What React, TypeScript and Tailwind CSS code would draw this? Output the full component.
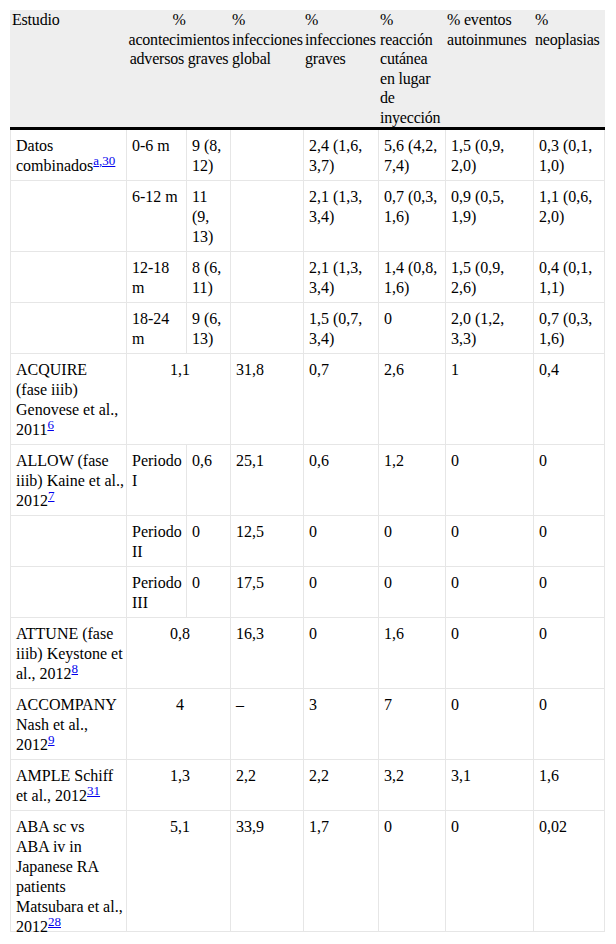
import type { ReactNode } from "react";

type Row = {
  // study name, one entry per printed line; the last line may carry a reference
  study: string[];
  ref?: string;
  // when span is set, the first value covers the two "acontecimientos" columns
  span?: boolean;
  cells: string[];
  tall?: boolean;
};

function Ref({ children }: { children: ReactNode }) {
  return <sup className="text-[13px] text-[#0000ee] underline">{children}</sup>;
}

const HEADERS: { lines: string[]; span?: number; pad: string }[] = [
  { lines: ["Estudio"], pad: "pl-[2px] text-left" },
  { lines: ["%", "acontecimientos", "adversos graves"], span: 2, pad: "px-0 text-center" },
  { lines: ["%", "infecciones", "global"], pad: "pl-[1px] text-left" },
  { lines: ["%", "infecciones", "graves"], pad: "pl-[1px] text-left" },
  { lines: ["%", "reacción", "cutánea", "en lugar", "de", "inyección"], pad: "pl-[1px] text-left" },
  { lines: ["% eventos", "autoinmunes"], pad: "pl-[1px] text-left" },
  { lines: ["%", "neoplasias"], pad: "pl-[1px] text-left" },
];

const ROWS: Row[] = [
  {
    study: ["Datos", "combinados"],
    ref: "a,30",
    cells: ["0-6 m", "9 (8, 12)", "", "2,4 (1,6, 3,7)", "5,6 (4,2, 7,4)", "1,5 (0,9, 2,0)", "0,3 (0,1, 1,0)"],
  },
  { study: [], cells: ["6-12 m", "11 (9, 13)", "", "2,1 (1,3, 3,4)", "0,7 (0,3, 1,6)", "0,9 (0,5, 1,9)", "1,1 (0,6, 2,0)"] },
  { study: [], cells: ["12-18 m", "8 (6, 11)", "", "2,1 (1,3, 3,4)", "1,4 (0,8, 1,6)", "1,5 (0,9, 2,6)", "0,4 (0,1, 1,1)"] },
  { study: [], cells: ["18-24 m", "9 (6, 13)", "", "1,5 (0,7, 3,4)", "0", "2,0 (1,2, 3,3)", "0,7 (0,3, 1,6)"] },
  {
    study: ["ACQUIRE", "(fase iiib)", "Genovese et al.,", "2011"],
    ref: "6",
    span: true,
    cells: ["1,1", "31,8", "0,7", "2,6", "1", "0,4"],
  },
  {
    study: ["ALLOW (fase", "iiib) Kaine et al.,", "2012"],
    ref: "7",
    cells: ["Periodo I", "0,6", "25,1", "0,6", "1,2", "0", "0"],
  },
  { study: [], cells: ["Periodo II", "0", "12,5", "0", "0", "0", "0"] },
  { study: [], cells: ["Periodo III", "0", "17,5", "0", "0", "0", "0"] },
  {
    study: ["ATTUNE (fase", "iiib) Keystone et", "al., 2012"],
    ref: "8",
    span: true,
    cells: ["0,8", "16,3", "0", "1,6", "0", "0"],
  },
  {
    study: ["ACCOMPANY", "Nash et al.,", "2012"],
    ref: "9",
    span: true,
    cells: ["4", "–", "3", "7", "0", "0"],
  },
  {
    study: ["AMPLE Schiff", "et al., 2012"],
    ref: "31",
    span: true,
    cells: ["1,3", "2,2", "2,2", "3,2", "3,1", "1,6"],
  },
  {
    study: ["ABA sc vs", "ABA iv in", "Japanese RA", "patients", "Matsubara et al.,", "2012"],
    ref: "28",
    span: true,
    tall: true,
    cells: ["5,1", "33,9", "1,7", "0", "0", "0,02"],
  },
];

function Study({ row }: { row: Row }) {
  return (
    <>
      {row.study.map((line, k) => (
        <span key={k} className="block whitespace-nowrap">
          {line}
          {k === row.study.length - 1 && row.ref && <Ref>{row.ref}</Ref>}
        </span>
      ))}
    </>
  );
}

const td = "align-top pl-[5px] pr-[2px] pt-[6px] pb-[4px] border-r border-b border-[#e6e6e6]";
const th = "align-top font-normal pr-0 pt-0 pb-0 bg-[#eeeeee] border-b-[3px] border-black tracking-[-0.2px]";

export default function App() {
  return (
    <div className="bg-white min-h-screen p-[10px] font-['Liberation_Serif',serif] text-[16px] leading-[20px] text-black">
      <table className="table-fixed w-[595px] border-separate border-spacing-0">
        <colgroup>
          <col className="w-[117px]" />
          <col className="w-[60px]" />
          <col className="w-[44px]" />
          <col className="w-[73px]" />
          <col className="w-[75px]" />
          <col className="w-[67px]" />
          <col className="w-[88px]" />
          <col className="w-[71px]" />
        </colgroup>
        <thead>
          <tr className="leading-[19.5px]">
            {HEADERS.map((h, i) => (
              <th key={i} colSpan={h.span ?? 1} className={`${th} ${h.pad}`}>
                {h.lines.map((l, k) => (
                  <span key={k} className="block whitespace-nowrap">
                    {l}
                  </span>
                ))}
              </th>
            ))}
          </tr>
        </thead>
        <tbody>
          {ROWS.map((row, i) => (
            <tr key={i}>
              <td className={`${td} border-l`}>
                {row.tall ? (
                  <div className="h-[110px]">
                    <Study row={row} />
                  </div>
                ) : (
                  <Study row={row} />
                )}
              </td>
              {row.cells.map((c, j) => (
                <td
                  key={j}
                  colSpan={row.span && j === 0 ? 2 : 1}
                  className={`${td} ${row.span && j === 0 ? "text-center" : "text-left"}`}
                >
                  {c}
                </td>
              ))}
            </tr>
          ))}
        </tbody>
      </table>
    </div>
  );
}
